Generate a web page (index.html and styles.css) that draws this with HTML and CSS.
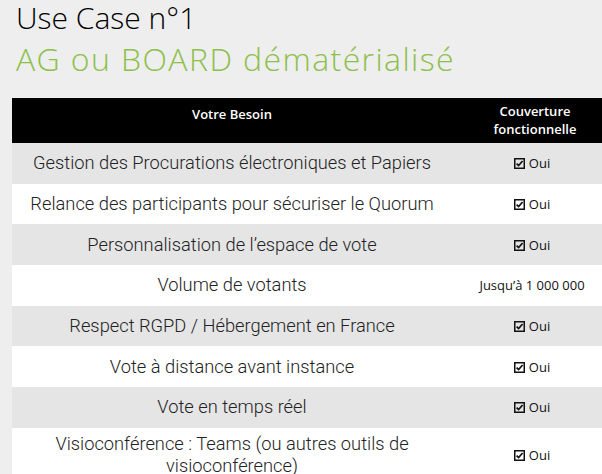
FILE: index.html
```html
<!DOCTYPE html>
<html lang="fr">
<head>
<meta charset="utf-8">
<link rel="stylesheet" href="styles.css">
</head>
<body>
<div class="page">
  <h1 class="title">Use Case n°1</h1>
  <h2 class="subtitle">AG ou BOARD dématérialisé</h2>
  <table class="grid">
    <thead>
      <tr>
        <th class="need">Votre Besoin</th>
        <th class="cov">Couverture<br>fonctionnelle</th>
      </tr>
    </thead>
    <tbody>
      <tr class="alt"><td class="need">Gestion des Procurations électroniques et Papiers</td><td class="cov"><svg class="chk" viewBox="0 0 11 11"><rect x="0.75" y="0.75" width="9.5" height="9.5" fill="none" stroke="#111" stroke-width="1.5"/><path d="M2.6 5.6 L4.6 7.6 L8.6 3" fill="none" stroke="#111" stroke-width="1.7"/></svg>Oui</td></tr>
      <tr><td class="need">Relance des participants pour sécuriser le Quorum</td><td class="cov"><svg class="chk" viewBox="0 0 11 11"><rect x="0.75" y="0.75" width="9.5" height="9.5" fill="none" stroke="#111" stroke-width="1.5"/><path d="M2.6 5.6 L4.6 7.6 L8.6 3" fill="none" stroke="#111" stroke-width="1.7"/></svg>Oui</td></tr>
      <tr class="alt"><td class="need">Personnalisation de l’espace de vote</td><td class="cov"><svg class="chk" viewBox="0 0 11 11"><rect x="0.75" y="0.75" width="9.5" height="9.5" fill="none" stroke="#111" stroke-width="1.5"/><path d="M2.6 5.6 L4.6 7.6 L8.6 3" fill="none" stroke="#111" stroke-width="1.7"/></svg>Oui</td></tr>
      <tr><td class="need">Volume de votants</td><td class="cov">Jusqu’à 1 000 000</td></tr>
      <tr class="alt"><td class="need">Respect RGPD / Hébergement en France</td><td class="cov"><svg class="chk" viewBox="0 0 11 11"><rect x="0.75" y="0.75" width="9.5" height="9.5" fill="none" stroke="#111" stroke-width="1.5"/><path d="M2.6 5.6 L4.6 7.6 L8.6 3" fill="none" stroke="#111" stroke-width="1.7"/></svg>Oui</td></tr>
      <tr><td class="need">Vote à distance avant instance</td><td class="cov"><svg class="chk" viewBox="0 0 11 11"><rect x="0.75" y="0.75" width="9.5" height="9.5" fill="none" stroke="#111" stroke-width="1.5"/><path d="M2.6 5.6 L4.6 7.6 L8.6 3" fill="none" stroke="#111" stroke-width="1.7"/></svg>Oui</td></tr>
      <tr class="alt"><td class="need">Vote en temps réel</td><td class="cov"><svg class="chk" viewBox="0 0 11 11"><rect x="0.75" y="0.75" width="9.5" height="9.5" fill="none" stroke="#111" stroke-width="1.5"/><path d="M2.6 5.6 L4.6 7.6 L8.6 3" fill="none" stroke="#111" stroke-width="1.7"/></svg>Oui</td></tr>
      <tr class="tall"><td class="need">Visioconférence : Teams (ou autres outils de visioconférence)</td><td class="cov"><svg class="chk" viewBox="0 0 11 11"><rect x="0.75" y="0.75" width="9.5" height="9.5" fill="none" stroke="#111" stroke-width="1.5"/><path d="M2.6 5.6 L4.6 7.6 L8.6 3" fill="none" stroke="#111" stroke-width="1.7"/></svg>Oui</td></tr>
    </tbody>
  </table>
</div>
</body>
</html>
```
FILE: styles.css
```css
html, body {
  margin: 0;
  padding: 0;
  background: #eeeeee;
  overflow: hidden;
}
.page {
  padding: 0 0 0 12px;
  width: 606px;
}
.title, .subtitle {
  margin: 0;
  padding-left: 4px;
  font-family: "Open Sans", sans-serif;
  font-weight: 300;
}
.title {
  color: #000000;
  font-size: 30px;
  line-height: 36px;
}
.subtitle {
  color: #8cc04b;
  font-size: 32px;
  line-height: 45px;
  letter-spacing: 1.4px;
  margin-bottom: 17px;
}
.grid {
  border-collapse: collapse;
  width: 606px;
  table-layout: fixed;
}
.grid th {
  background: #000000;
  color: #ffffff;
  font-family: "Open Sans", sans-serif;
  font-weight: 600;
  font-size: 13px;
  line-height: 18px;
  height: 45px;
  padding: 0;
  text-align: center;
  vertical-align: top;
  padding-top: 7px;
  box-sizing: border-box;
}
.grid th.need { width: 440px; }
.grid th.cov { width: 166px; padding-top: 4px; }
.grid td {
  padding: 0;
  text-align: center;
  vertical-align: middle;
  height: 40.7px;
  color: #222222;
}
.grid td.need {
  font-family: Roboto, sans-serif;
  font-weight: 300;
  font-size: 18.3px;
  line-height: 22px;
}
.grid td.cov {
  font-family: "Open Sans", sans-serif;
  font-size: 13px;
  padding-right: 6px;
  color: #111111;
}
.chk {
  width: 11px;
  height: 11px;
  margin-right: 4px;
  vertical-align: -1px;
}
.grid tr { background: #ffffff; }
.grid tr.alt { background: #e5e5e5; }
.grid tr.tall td { height: 54px; }
```
